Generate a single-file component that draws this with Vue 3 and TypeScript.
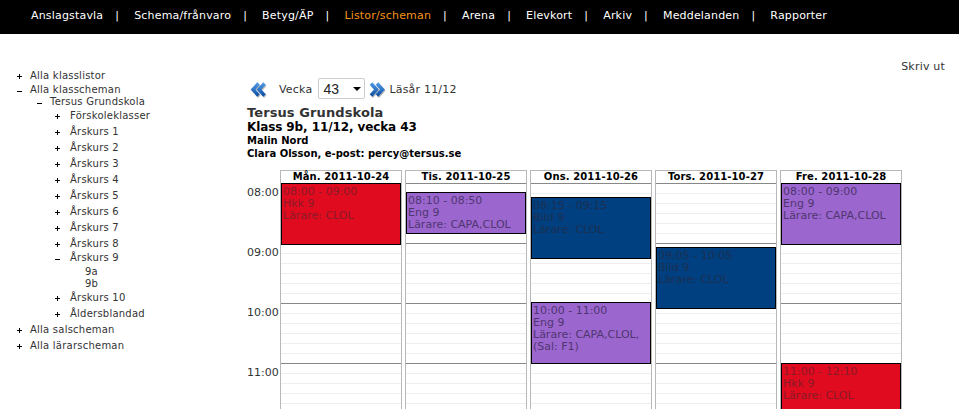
<script setup lang="ts">
interface Row { label: string; depth: number; sign: '' | '+' | '-'; gap: number }
interface Ev { time: string; subject: string; lines: string[]; top: number; height: number; kind: string }
interface Day { title: string; events: Ev[] }

const nav: string[] = ['Anslagstavla', 'Schema/frånvaro', 'Betyg/ÄP', 'Listor/scheman', 'Arena', 'Elevkort', 'Arkiv', 'Meddelanden', 'Rapporter']

const tree: Row[] = [
  { label: 'Alla klasslistor', depth: 0, sign: '+', gap: 2 },
  { label: 'Alla klasscheman', depth: 0, sign: '-', gap: 0 },
  { label: 'Tersus Grundskola', depth: 1, sign: '-', gap: 2 },
  { label: 'Förskoleklasser', depth: 2, sign: '+', gap: 4 },
  { label: 'Årskurs 1', depth: 2, sign: '+', gap: 4 },
  { label: 'Årskurs 2', depth: 2, sign: '+', gap: 4 },
  { label: 'Årskurs 3', depth: 2, sign: '+', gap: 4 },
  { label: 'Årskurs 4', depth: 2, sign: '+', gap: 4 },
  { label: 'Årskurs 5', depth: 2, sign: '+', gap: 4 },
  { label: 'Årskurs 6', depth: 2, sign: '+', gap: 4 },
  { label: 'Årskurs 7', depth: 2, sign: '+', gap: 4 },
  { label: 'Årskurs 8', depth: 2, sign: '+', gap: 2 },
  { label: 'Årskurs 9', depth: 2, sign: '-', gap: 2 },
  { label: '9a', depth: 3, sign: '', gap: 0 },
  { label: '9b', depth: 3, sign: '', gap: 2 },
  { label: 'Årskurs 10', depth: 2, sign: '+', gap: 4 },
  { label: 'Åldersblandad', depth: 2, sign: '+', gap: 4 },
  { label: 'Alla salscheman', depth: 0, sign: '+', gap: 4 },
  { label: 'Alla lärarscheman', depth: 0, sign: '+', gap: 4 },
]

const days: Day[] = [
  { title: 'Mån. 2011-10-24', events: [
    { time: '08:00 - 09:00', subject: 'Hkk 9', lines: ['Lärare: CLOL'], top: -1, height: 62, kind: 'red' },
  ] },
  { title: 'Tis. 2011-10-25', events: [
    { time: '08:10 - 08:50', subject: 'Eng 9', lines: ['Lärare: CAPA,CLOL'], top: 8, height: 42, kind: 'purple' },
  ] },
  { title: 'Ons. 2011-10-26', events: [
    { time: '08:15 - 09:15', subject: 'Bild 9', lines: ['Lärare: CLOL'], top: 13, height: 62, kind: 'blue' },
    { time: '10:00 - 11:00', subject: 'Eng 9', lines: ['Lärare: CAPA,CLOL,', '(Sal: F1)'], top: 118, height: 62, kind: 'purple' },
  ] },
  { title: 'Tors. 2011-10-27', events: [
    { time: '09:05 - 10:05', subject: 'Bild 9', lines: ['Lärare: CLOL'], top: 63, height: 62, kind: 'blue' },
  ] },
  { title: 'Fre. 2011-10-28', events: [
    { time: '08:00 - 09:00', subject: 'Eng 9', lines: ['Lärare: CAPA,CLOL'], top: -1, height: 62, kind: 'purple' },
    { time: '11:00 - 12:10', subject: 'Hkk 9', lines: ['Lärare: CLOL'], top: 179, height: 72, kind: 'red' },
  ] },
]

const hours: string[] = ['08:00', '09:00', '10:00', '11:00']

function evStyle(e: Ev) {
  return { top: `${e.top}px`, height: `${e.height}px` }
}
</script>

<template>
  <div class="page">
    <nav class="nav">
      <template v-for="(n, i) in nav" :key="n">
        <a class="nav-link" :class="{ active: n === 'Listor/scheman' }">{{ n }}</a>
        <span v-if="i < nav.length - 1" class="nav-sep">|</span>
      </template>
    </nav>

    <div class="body">
      <ul class="tree">
        <li v-for="r in tree" :key="r.label" class="row" :class="[`d${r.depth}`, `g${r.gap}`]">
          <svg v-if="r.sign" class="sign" width="5" height="5" viewBox="0 0 5 5" shape-rendering="crispEdges">
            <path v-if="r.sign === '+'" d="M0 2h5v1H0zM2 0h1v5H2z" fill="#000" />
            <path v-else d="M0 3h5v1H0z" fill="#000" />
          </svg>
          <span class="label">{{ r.label }}</span>
        </li>
      </ul>

      <main class="main">
        <div class="print">Skriv ut</div>
        <div class="week">
          <svg class="arrow prev" width="18" height="16" viewBox="0 0 18 16">
            <defs>
              <linearGradient id="chev-a" x1="0" y1="0" x2="0" y2="1">
                <stop offset="0" stop-color="#4f97e4" />
                <stop offset="1" stop-color="#0f52a8" />
              </linearGradient>
            </defs>
            <path d="M9.500 2 4 8l5.500 6M15.500 2 10 8l5.500 6" fill="none" stroke="#bdbdbd" stroke-width="3.500" transform="translate(.8 .8)" />
            <path d="M9.500 1.500 4 7.500l5.500 6M15.500 1.500 10 7.500l5.500 6" fill="none" stroke="url(#chev-a)" stroke-width="3.500" />
          </svg>
          <span class="week-label">Vecka</span>
          <span class="select-box"><select class="select"><option>43</option></select></span>
          <svg class="arrow next" width="17" height="16" viewBox="0 0 17 16">
            <defs>
              <linearGradient id="chev-b" x1="0" y1="0" x2="0" y2="1">
                <stop offset="0" stop-color="#4f97e4" />
                <stop offset="1" stop-color="#0f52a8" />
              </linearGradient>
            </defs>
            <path d="M2 2l5.500 6L2 14M8 2l5.500 6L8 14" fill="none" stroke="#bdbdbd" stroke-width="3.500" transform="translate(.8 .8)" />
            <path d="M2 1.500l5.500 6-5.500 6M8 1.500l5.500 6-5.500 6" fill="none" stroke="url(#chev-b)" stroke-width="3.500" />
          </svg>
          <span class="year">Läsår 11/12</span>
        </div>
        <h1 class="school">Tersus Grundskola</h1>
        <h2 class="klass">Klass 9b, 11/12, vecka 43</h2>
        <div class="person">Malin Nord</div>
        <div class="person">Clara Olsson, e-post: percy@tersus.se</div>

        <div class="cal">
          <div class="hours">
            <div v-for="h in hours" :key="h" class="hour">{{ h }}</div>
          </div>
          <section v-for="d in days" :key="d.title" class="day">
            <header class="day-head">{{ d.title }}</header>
            <div class="slots">
              <div v-for="e in d.events" :key="e.time" class="event" :class="e.kind" :style="evStyle(e)">
                <div>{{ e.time }}</div>
                <div>{{ e.subject }}</div>
                <div v-for="l in e.lines" :key="l">{{ l }}</div>
              </div>
            </div>
          </section>
        </div>
      </main>
    </div>
  </div>
</template>

<style>
html, body { margin: 0; background: #fff; overflow: hidden; }
</style>

<style scoped>
.page {
  width: 959px;
  height: 409px;
  overflow: hidden;
  font-family: "DejaVu Sans", Verdana, sans-serif;
  font-size: 11px;
  color: #333;
}
.nav {
  height: 34px;
  background: #000;
  display: flex;
  align-items: center;
  padding-left: 31px;
  color: #fff;
  line-height: 14px;
  padding-bottom: 2px;
  box-sizing: border-box;
  letter-spacing: .18px;
}
.nav-link { color: #fff; }
.nav-link.active { color: #f7941d; }
.nav-sep { margin: 0 15px 0 12px; }
.body { display: flex; }
.tree {
  list-style: none;
  margin: 36px 0 0;
  padding: 0 0 0 16px;
  width: 247px;
  box-sizing: border-box;
  flex: none;
  font-size: 10px;
  letter-spacing: .23px;
}
.row { display: flex; align-items: center; height: 12px; line-height: 12px; position: relative; }
.sign { position: absolute; top: 4px; left: var(--sign); }
.d0 { padding-left: 14px; --sign: 1px; }
.d1 { padding-left: 34px; --sign: 21px; }
.d2 { padding-left: 54px; --sign: 39px; }
.d3 { padding-left: 69px; }
.g0 { margin-bottom: 0; }
.g2 { margin-bottom: 2px; }
.g4 { margin-bottom: 4px; }
.main { flex: 1; min-width: 0; position: relative; padding-top: 44px; }
.print { position: absolute; right: 14px; top: 26px; line-height: 14px; letter-spacing: .2px; }
.week { display: flex; align-items: center; height: 21px; margin-left: 2px; letter-spacing: .2px; }
.arrow { flex: none; }
.arrow.prev { margin-top: 3px; }
.arrow.next { margin: 3px 0 0 4px; }
.week-label { margin: 1px 6px 0 12px; }
.select-box {
  position: relative;
  width: 47px;
  height: 21px;
  box-sizing: border-box;
  border: 1px solid #ccc;
  border-radius: 2px;
  background: #fff;
}
.select-box::after {
  content: "";
  position: absolute;
  right: 3px;
  top: 8px;
  border-left: 4px solid transparent;
  border-right: 4px solid transparent;
  border-top: 4px solid #000;
  pointer-events: none;
}
.select {
  appearance: none;
  border: 0;
  background: transparent;
  width: 100%;
  height: 100%;
  padding: 0 0 0 4px;
  font: 14px "Liberation Sans", Arial, sans-serif;
  color: #222;
  display: block;
}
.year { margin: 1px 0 0 3px; }
.school { margin: 6px 0 0; font-size: 13px; line-height: 15px; font-weight: bold; letter-spacing: .1px; }
.klass { margin: 0; font-size: 12px; line-height: 14px; font-weight: bold; color: #000; letter-spacing: -.1px; }
.person { font-size: 10px; line-height: 13px; font-weight: bold; color: #000; }
.cal { display: flex; margin-top: 10px; }
.hours { width: 33px; flex: none; padding-top: 14px; box-sizing: border-box; text-align: left; }
.hour { height: 60px; line-height: 14px; padding-top: 2px; box-sizing: border-box; color: #333; }
.day {
  width: 122px;
  margin-right: 3px;
  box-sizing: border-box;
  border: 1px solid #b8b8b8;
  border-bottom: 0;
  flex: none;
  height: 300px;
}
.day-head {
  height: 12px;
  line-height: 12px;
  text-align: center;
  font-weight: bold;
  font-size: 10px;
  letter-spacing: .1px;
  color: #000;
  border-bottom: 1px solid #888;
}
.slots {
  position: relative;
  height: 286px;
  background-image:
    repeating-linear-gradient(to bottom, transparent 0 59px, #888 59px 60px),
    repeating-linear-gradient(to bottom, transparent 0 9px, #eee 9px 10px);
}
.event {
  position: absolute;
  left: 0;
  right: 0;
  box-sizing: border-box;
  border: 1px solid #000;
  padding: 2px 1px;
  line-height: 12px;
  font-size: 11px;
}
.red { background: #e00b1f; color: #8a1a26; }
.purple { background: #9c66cf; color: #4f3670; }
.blue { background: #003f80; color: #1c3050; }
</style>
